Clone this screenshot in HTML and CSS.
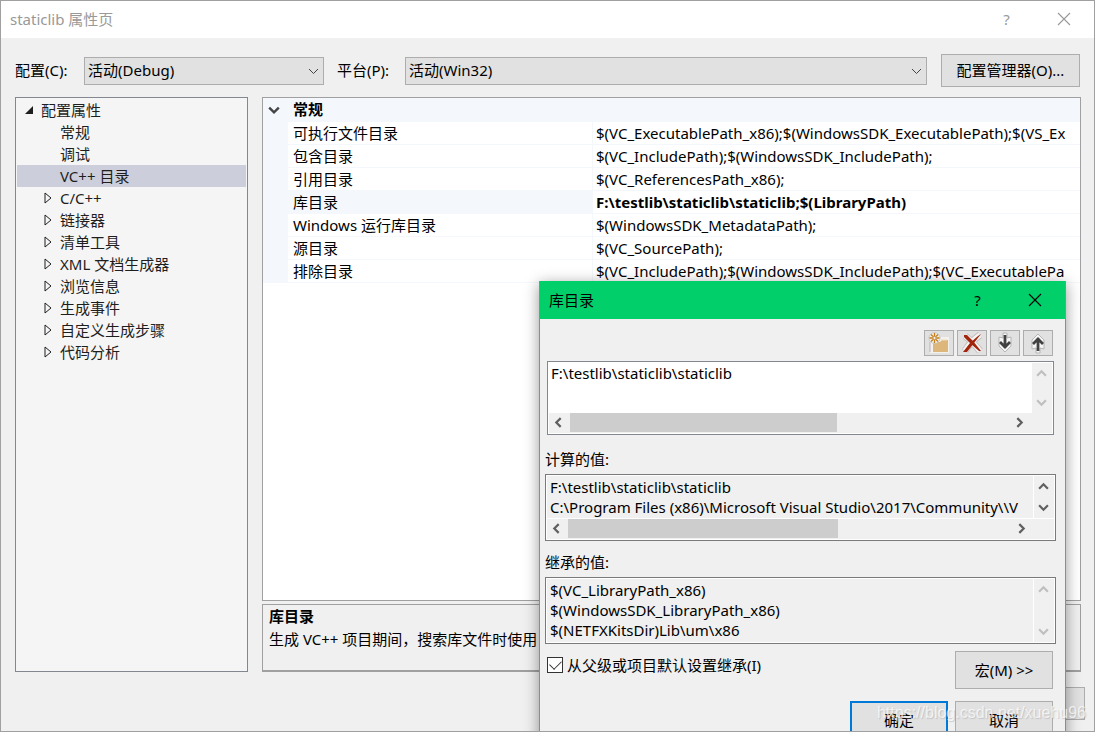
FILE: index.html
```html
<!DOCTYPE html>
<html lang="zh-CN">
<head>
<meta charset="utf-8">
<title>staticlib 属性页</title>
<link rel="stylesheet" href="styles.css">
</head>
<body>
<svg class="defs" aria-hidden="true">
  <symbol id="chev-up" viewBox="0 0 10 10"><path d="M1 7 5 3 9 7" fill="none" stroke="currentColor" stroke-width="2"/></symbol>
  <symbol id="chev-down" viewBox="0 0 10 10"><path d="M1 3 5 7 9 3" fill="none" stroke="currentColor" stroke-width="2"/></symbol>
  <symbol id="chev-left" viewBox="0 0 10 10"><path d="M7 1 3 5 7 9" fill="none" stroke="currentColor" stroke-width="2"/></symbol>
  <symbol id="chev-right" viewBox="0 0 10 10"><path d="M3 1 7 5 3 9" fill="none" stroke="currentColor" stroke-width="2"/></symbol>
  <symbol id="close" viewBox="0 0 14 14"><path d="M1 1 13 13M13 1 1 13" fill="none" stroke="currentColor" stroke-width="1.1"/></symbol>
  <symbol id="closed-node" viewBox="0 0 8 12"><path d="M1 1 7 6 1 11Z" fill="none" stroke="currentColor"/></symbol>
</svg>
<main class="window">
  <header class="titlebar">
    <h1 class="title">staticlib 属性页</h1>
    <button class="caption-button" aria-label="帮助">?</button>
    <button class="caption-button" aria-label="关闭"><svg class="close-icon"><use href="#close"/></svg></button>
  </header>

  <div class="toolbar">
    <label class="config-label" for="config">配置(C):</label>
    <div class="combo combo-config">
      <select id="config"><option>活动(Debug)</option></select>
      <svg class="combo-arrow" viewBox="0 0 11 7"><path d="M1 1 5.500 5.500 10 1"/></svg>
    </div>
    <label class="platform-label" for="platform">平台(P):</label>
    <div class="combo combo-platform">
      <select id="platform"><option>活动(Win32)</option></select>
      <svg class="combo-arrow" viewBox="0 0 11 7"><path d="M1 1 5.500 5.500 10 1"/></svg>
    </div>
    <button class="button manager">配置管理器(O)...</button>
  </div>

  <div class="content">
    <nav class="tree">
      <div class="node root"><svg class="open-mark" viewBox="0 0 8 8"><path d="M8 0V8H0Z"/></svg>配置属性</div>
      <ul class="nodes">
        <li class="node"><span class="mark"></span>常规</li>
        <li class="node"><span class="mark"></span>调试</li>
        <li class="node selected"><span class="mark"></span>VC++ 目录</li>
        <li class="node"><svg class="mark"><use href="#closed-node"/></svg>C/C++</li>
        <li class="node"><svg class="mark"><use href="#closed-node"/></svg>链接器</li>
        <li class="node"><svg class="mark"><use href="#closed-node"/></svg>清单工具</li>
        <li class="node"><svg class="mark"><use href="#closed-node"/></svg>XML 文档生成器</li>
        <li class="node"><svg class="mark"><use href="#closed-node"/></svg>浏览信息</li>
        <li class="node"><svg class="mark"><use href="#closed-node"/></svg>生成事件</li>
        <li class="node"><svg class="mark"><use href="#closed-node"/></svg>自定义生成步骤</li>
        <li class="node"><svg class="mark"><use href="#closed-node"/></svg>代码分析</li>
      </ul>
    </nav>
    <section class="details">
      <div class="properties">
        <table class="grid">
          <colgroup><col class="gutter-col"><col class="name-col"><col></colgroup>
          <thead>
            <tr><th><svg class="group-arrow"><use href="#chev-down"/></svg></th><th colspan="2">常规</th></tr>
          </thead>
          <tbody>
            <tr><td></td><td>可执行文件目录</td><td>$(VC_ExecutablePath_x86);$(WindowsSDK_ExecutablePath);$(VS_Ex</td></tr>
            <tr><td></td><td>包含目录</td><td>$(VC_IncludePath);$(WindowsSDK_IncludePath);</td></tr>
            <tr><td></td><td>引用目录</td><td>$(VC_ReferencesPath_x86);</td></tr>
            <tr class="current"><td></td><td>库目录</td><td>F:\testlib\staticlib\staticlib;$(LibraryPath)</td></tr>
            <tr><td></td><td>Windows 运行库目录</td><td>$(WindowsSDK_MetadataPath);</td></tr>
            <tr><td></td><td>源目录</td><td>$(VC_SourcePath);</td></tr>
            <tr><td></td><td>排除目录</td><td>$(VC_IncludePath);$(WindowsSDK_IncludePath);$(VC_ExecutablePa</td></tr>
          </tbody>
        </table>
      </div>
      <div class="description">
        <h2>库目录</h2>
        <p>生成 VC++ 项目期间，搜索库文件时使用</p>
      </div>
    </section>
  </div>
  <footer class="footer"><button class="button apply" aria-label="应用"></button></footer>

  <section class="dialog" role="dialog" aria-labelledby="dialog-title">
    <header class="titlebar dialog-titlebar">
      <h2 class="title" id="dialog-title">库目录</h2>
      <button class="caption-button" aria-label="帮助">?</button>
      <button class="caption-button" aria-label="关闭"><svg class="close-icon"><use href="#close"/></svg></button>
    </header>
    <div class="tools">
      <button class="button tool" aria-label="新行">
        <svg viewBox="0 0 22 22"><path d="M3 9v11h17V6h-7" fill="#f3f1ec" stroke="#f3f1ec" stroke-width="2"/><path d="M2 10v10" stroke="#b5b5b5"/><path d="M5 10h7l2-2h6v12H5z" fill="#dcb67a"/><path d="M13 8h6" stroke="#f0dcbc"/><circle cx="6.500" cy="6" r="5.500" fill="#f4f0e8" stroke="#b5b5b5" stroke-width=".6"/><path d="M6.500 1v3M6.500 8v3M1.500 6h3M8.500 6h3M3 2.500 5 4.500M8 7.500l2 2M10 2.500l-2 2M5 7.500l-2 2" stroke="#c27d1a" stroke-width="1.300"/><circle cx="6.500" cy="6" r="1.700" fill="none" stroke="#c27d1a"/></svg>
      </button>
      <button class="button tool" aria-label="删除">
        <svg viewBox="0 0 22 22"><path d="M4 4Q11 9 19 19M19 3Q10 9 4 19" fill="none" stroke="#b9b9b9" stroke-width="7"/><path d="M4 4Q11 9 19 19M19 3Q10 9 4 19" fill="none" stroke="#f5f3f1" stroke-width="5.500"/><path d="M3 3 6 3 12 9 20 19 18 19 10 12 3 5zM20 2 13 11 6 20H2L9 11 17 4z" fill="#a1260d"/></svg>
      </button>
      <button class="button tool" aria-label="下移">
        <svg viewBox="0 0 22 22"><path d="M9 1h4v5l4-1v9l-6 6-6-6V5l4 1z" fill="#f6f6f6" stroke="#b5b5b5" stroke-width="1"/><path d="M11 3v13M6 10l5 5 5-5" fill="none" stroke="#424242" stroke-width="2.800"/></svg>
      </button>
      <button class="button tool" aria-label="上移">
        <svg viewBox="0 0 22 22"><path d="M9 21h4v-5l4 1V8l-6-6-6 6v9l4-1z" fill="#f6f6f6" stroke="#b5b5b5" stroke-width="1"/><path d="M11 19V6M6 12l5-5 5 5" fill="none" stroke="#424242" stroke-width="2.800"/></svg>
      </button>
    </div>
    <div class="listbox editable">
      <textarea aria-label="目录" wrap="off" rows="2">F:\testlib\staticlib\staticlib</textarea>
      <div class="vscroll disabled"><svg><use href="#chev-up"/></svg><svg><use href="#chev-down"/></svg></div>
      <div class="hscroll"><svg><use href="#chev-left"/></svg><div class="track"><div class="thumb"></div></div><svg><use href="#chev-right"/></svg></div>
    </div>
    <label class="caption" for="evaluated">计算的值:</label>
    <div class="listbox evaluated">
      <textarea id="evaluated" readonly wrap="off" rows="2">F:\testlib\staticlib\staticlib
C:\Program Files (x86)\Microsoft Visual Studio\2017\Community\\V</textarea>
      <div class="vscroll"><svg><use href="#chev-up"/></svg><svg><use href="#chev-down"/></svg></div>
      <div class="hscroll"><svg><use href="#chev-left"/></svg><div class="track"><div class="thumb"></div></div><svg><use href="#chev-right"/></svg></div>
    </div>
    <label class="caption" for="inherited">继承的值:</label>
    <div class="listbox inherited">
      <textarea id="inherited" readonly wrap="off" rows="3">$(VC_LibraryPath_x86)
$(WindowsSDK_LibraryPath_x86)
$(NETFXKitsDir)Lib\um\x86</textarea>
      <div class="vscroll disabled"><svg><use href="#chev-up"/></svg><svg><use href="#chev-down"/></svg></div>
    </div>
    <div class="options">
      <div class="inherit"><input type="checkbox" id="inherit" checked><label for="inherit">从父级或项目默认设置继承(I)</label></div>
      <button class="button wide">宏(M) &gt;&gt;</button>
    </div>
    <div class="actions">
      <button class="button wide default">确定</button>
      <button class="button wide">取消</button>
    </div>
  </section>
  <div class="watermark">https://blog.csdn.net/xuehu96</div>
</main>
</body>
</html>
```
FILE: styles.css
```css
* { box-sizing: border-box; }

body {
  margin: 0;
  color: #000;
  background: #f0f0f0;
  font: 15px/22px "Noto Sans", "Noto Sans CJK SC", sans-serif;
}

button, select, textarea, input { font: inherit; color: inherit; margin: 0; }
h1, h2, p, ul { margin: 0; padding: 0; font-size: inherit; }
.defs { display: none; }

.window {
  position: relative;
  display: flex;
  flex-direction: column;
  height: 100vh;
  overflow: hidden;
  border: 1px solid #a0a0a0;
  background: #f0f0f0;
}

.titlebar {
  display: flex;
  align-items: center;
  flex: none;
  height: 37px;
  padding: 0 2px 1px 9px;
  color: #999;
  background: #fff;
}
.title { flex: 1; font-weight: 400; }
.caption-button {
  display: grid;
  place-items: center;
  width: 57px;
  height: 36px;
  padding: 0;
  border: 0;
  background: none;
}
.close-icon { width: 14px; height: 14px; }

.toolbar {
  display: flex;
  align-items: center;
  flex: none;
  padding: 16px 14px 10px;
}
.config-label { width: 69px; padding-bottom: 2px; }
.platform-label { width: 68px; padding-bottom: 2px; }
.combo { position: relative; }
.combo-config { width: 240px; margin-right: 13px; }
.combo-platform { flex: 1; margin-right: 14px; }
.combo select {
  appearance: none;
  display: block;
  width: 100%;
  height: 28px;
  padding: 0 24px 2px 3px;
  border: 1px solid #adadad;
  border-radius: 0;
  background: #e1e1e1;
}
.combo-arrow {
  position: absolute;
  right: 5px;
  top: 11px;
  width: 11px;
  height: 7px;
  fill: none;
  stroke: #444;
  pointer-events: none;
}

.button {
  padding: 0;
  border: 1px solid #adadad;
  border-radius: 0;
  background: #e1e1e1;
}
.manager { width: 139px; height: 33px; padding-bottom: 2px; }

.content {
  display: flex;
  flex: 1;
  gap: 14px;
  min-height: 0;
  padding: 0 13px 0 14px;
}
.tree {
  width: 233px;
  padding: 1px;
  border: 1px solid #828790;
  background: #f5f5f5;
  color: #1e1e1e;
}
.nodes { list-style: none; }
.node { display: flex; align-items: center; height: 22px; padding-left: 27px; }
.root { padding-left: 8px; }
.selected { background: #cccedb; }
.mark { width: 8px; height: 12px; margin-right: 8px; }
.open-mark { width: 8px; height: 8px; margin-right: 8px; fill: #1e1e1e; }

.details { display: flex; flex: 1; flex-direction: column; gap: 3px; min-width: 0; }
.properties { flex: 1; min-height: 0; overflow: hidden; border: 1px solid #a0a0a0; background: #fff; }
.grid { width: 100%; table-layout: fixed; border-collapse: separate; border-spacing: 0; }
.gutter-col { width: 25px; }
.name-col { width: 305px; }
.grid th { height: 24px; padding: 0 5px 2px; line-height: 20px; text-align: left; background: #f4f7fc; }
.grid th:first-child { padding: 0 0 0 5px; }
.grid td {
  height: 23px;
  padding: 0 0 0 5px;
  overflow: hidden;
  white-space: nowrap;
  border-bottom: 1px solid #f4f7fc;
}
.grid td:first-child { background: #f4f7fc; }
.grid td:nth-child(2) { border-right: 1px solid #f4f7fc; }
.grid td:nth-child(3) { padding-left: 3px; }
.current td:nth-child(2) { background: #f4f7fc; }
.current td:nth-child(3) { font-weight: 700; }
.group-arrow { display: block; width: 12px; height: 12px; color: #444; }

.description {
  height: 68px;
  padding: 0 6px;
  overflow: hidden;
  white-space: nowrap;
  border: 1px solid #a0a0a0;
  border-bottom-width: 2px;
}
.description p { line-height: 24px; }

.footer { display: flex; flex: none; justify-content: flex-end; padding: 15px 9px 11px; }
.apply { width: 98px; height: 33px; }

.dialog {
  position: absolute;
  top: 280px;
  right: 28px;
  display: flex;
  flex-direction: column;
  width: 527px;
  padding: 0 11px 11px 5px;
  border: 1px solid #20c878;
  border-top: 0;
  background: #f0f0f0;
  box-shadow: 0 3px 14px rgba(0, 0, 0, .4);
}
.dialog-titlebar {
  height: 38px;
  margin: 0 -11px 0 -5px;
  color: #000;
  background: #00cf6a;
}
.tools { display: flex; justify-content: flex-end; gap: 3px; padding: 11px 1px 5px 0; }
.tool { display: grid; place-items: center; width: 30px; height: 26px; }
.tool svg { width: 22px; height: 22px; }

.listbox {
  display: grid;
  grid-template-columns: 1fr 21px;
  margin-right: -2px;
  padding: 1px;
  border: 1px solid #7a7a7a;
  background: #f0f0f0;
  box-shadow: inset 0 0 0 1px #fff;
}
.listbox textarea {
  display: block;
  width: calc(100% - 5px);
  height: 42px;
  padding: 1px 3px;
  overflow: hidden;
  border: 0;
  border-radius: 0;
  outline: 0;
  resize: none;
  line-height: 20px;
  background: #f0f0f0;
}
.listbox.editable { margin: 0 0 0 2px; border-color: #828790; }
.listbox.editable textarea { width: 100%; height: 50px; padding: 0 2px; background: #fff; }
.listbox.inherited textarea { height: 63px; }
.vscroll {
  display: flex;
  flex-direction: column;
  align-items: center;
  justify-content: space-between;
  padding: 5px 1px 5px 0;
  border-left: 1px solid #fff;
  color: #606060;
  background: #f0f0f0;
}
.vscroll svg, .hscroll svg { flex: none; width: 11px; height: 11px; }
.vscroll.disabled { color: #bfbfbf; }
.hscroll {
  display: flex;
  align-items: center;
  grid-column: 1 / -1;
  height: 20px;
  padding: 0 27px 1px 4px;
  color: #606060;
  background: #f0f0f0;
}
.evaluated .hscroll { border-top: 1px solid #fff; height: 21px; }
.track { flex: 1; height: 19px; padding: 0 6px; }
.thumb { width: 61%; height: 100%; background: #cdcdcd; }
.caption { padding: 13px 0 4px; }
.evaluated + .caption { padding-top: 10px; }

.options { display: flex; justify-content: space-between; padding: 7px 1px 12px 2px; }
.inherit { display: flex; align-items: center; align-self: flex-start; gap: 4px; height: 28px; }
.inherit input {
  appearance: none;
  width: 16px;
  height: 16px;
  border: 1px solid #333;
  background: #fff;
  position: relative;
}
.inherit input:checked::after {
  content: "";
  position: absolute;
  left: 2px;
  top: 2px;
  width: 10px;
  height: 6px;
  border: solid #333;
  border-width: 0 0 1px 1px;
  transform: rotate(-45deg);
}
.actions { display: flex; justify-content: flex-end; gap: 7px; padding-right: 1px; }
.wide { width: 98px; height: 38px; }
.default { border: 2px solid #0078d7; }

.watermark {
  position: absolute;
  right: 8px;
  bottom: 8px;
  color: rgba(255, 255, 255, .7);
  font: 16px/20px "Liberation Sans", sans-serif;
  text-shadow: 1px 1px 1px rgba(150, 150, 150, .4);
  pointer-events: none;
}
```
